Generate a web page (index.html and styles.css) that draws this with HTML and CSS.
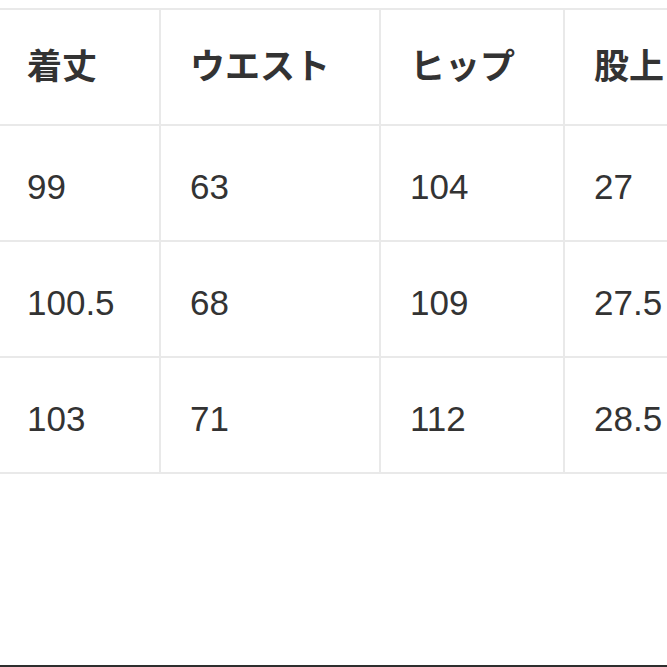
FILE: index.html
```html
<!DOCTYPE html>
<html lang="ja">
<head>
<meta charset="utf-8">
<title>サイズ表</title>
<link rel="stylesheet" href="styles.css">
</head>
<body>
<div class="page">
  <div class="size-table">
    <div class="cell head">着丈</div>
    <div class="cell head">ウエスト</div>
    <div class="cell head">ヒップ</div>
    <div class="cell head">股上</div>

    <div class="cell">99</div>
    <div class="cell">63</div>
    <div class="cell">104</div>
    <div class="cell">27</div>

    <div class="cell">100.5</div>
    <div class="cell">68</div>
    <div class="cell">109</div>
    <div class="cell">27.5</div>

    <div class="cell">103</div>
    <div class="cell">71</div>
    <div class="cell">112</div>
    <div class="cell">28.5</div>
  </div>
  <div class="bottom-rule"></div>
</div>
</body>
</html>
```

FILE: styles.css
```css
html, body {
  margin: 0;
  padding: 0;
  background: #ffffff;
  overflow: hidden;
}

.page {
  height: 667px;
  width: 667px;
  display: flex;
  flex-direction: column;
  overflow: hidden;
}

.size-table {
  margin-top: 8px;
  margin-left: -4px;
  padding: 2px;
  width: max-content;
  display: grid;
  grid-template-columns: 161px 218px 182px 200px;
  grid-auto-rows: 114px;
  gap: 2px;
  background: #e9e9e9;
}

.cell {
  background: #ffffff;
  display: flex;
  align-items: center;
  padding: 6px 0 0 29px;
  font-family: "Liberation Sans", Arial, sans-serif;
  font-size: 35px;
  line-height: 1;
  color: #333333;
  white-space: nowrap;
}

.cell.head {
  padding: 0 0 8px 29px;
  font-family: "Noto Sans CJK JP", "Noto Sans", sans-serif;
  font-weight: 700;
  font-size: 35px;
  color: #333333;
}

.bottom-rule {
  margin-top: auto;
  height: 2px;
  background: #2e2e2e;
}
```
